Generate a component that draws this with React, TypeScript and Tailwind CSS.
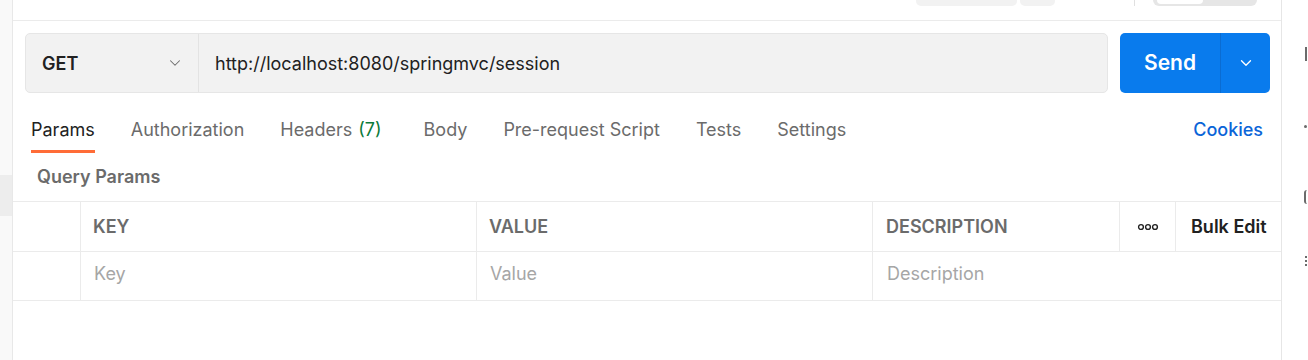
import { ChevronDown } from "lucide-react";

const tabs = [
  { label: "Params", active: true },
  { label: "Authorization" },
  { label: "Headers", count: "(7)" },
  { label: "Body" },
  { label: "Pre-request Script" },
  { label: "Tests" },
  { label: "Settings" },
];

const Dots = () => (
  <svg width="22" height="8" viewBox="0 0 22 8" fill="none" stroke="#212121" strokeWidth="1.4">
    <circle cx="4" cy="4" r="2.4" />
    <circle cx="11" cy="4" r="2.4" />
    <circle cx="18" cy="4" r="2.4" />
  </svg>
);

export default function App() {
  return (
    <div className="flex w-[1308px] h-[360px] bg-white font-['Inter',sans-serif] text-[18px] overflow-hidden">
      {/* left strip */}
      <div className="w-[13px] shrink-0 bg-[#f9f9f9] border-r border-[#e8e8e8] flex flex-col">
        <div className="h-[175px]" />
        <div className="h-[41px] bg-[#ededed]" />
      </div>

      {/* main panel */}
      <div className="w-[1269px] shrink-0 border-r border-[#e6e6e6] flex flex-col">
        {/* clipped toolbar */}
        <div className="h-[21px] border-b border-[#ebebeb] flex items-start">
          <div className="ml-[903px] w-[101px] h-[6px] bg-[#f2f2f2] rounded-b-[5px]" />
          <div className="ml-[3px] w-[35px] h-[6px] bg-[#f2f2f2] rounded-b-[5px]" />
          <div className="ml-[79px] w-px h-[6px] bg-[#e0e0e0]" />
          <div className="ml-[18px] w-[104px] h-[6px] bg-[#e6e6e6] rounded-b-[6px] pl-[4px]">
            <div className="w-[46px] h-[4px] bg-white rounded-b-[4px]" />
          </div>
        </div>

        {/* url row */}
        <div className="flex mt-[12px] pl-[12px] pr-[11px] gap-[12px]">
          <div className="flex flex-1 h-[60px] bg-[#f2f2f2] border border-[#e6e6e6] rounded-[5px]">
            <div className="w-[173px] flex items-center justify-between pl-[16px] pr-[14px] border-r border-[#e3e3e3]">
              <span className="font-semibold text-[#212121]">GET</span>
              <ChevronDown size={18} strokeWidth={1.4} className="text-[#6b6b6b]" />
            </div>
            <div className="flex items-center pl-[16px] text-[#212121]">
              http://localhost:8080/springmvc/session
            </div>
          </div>
          <div className="flex w-[150px] h-[60px] bg-[#097bed] rounded-[5px] text-white">
            <div className="w-[101px] flex items-center justify-center border-r border-[#0a6cd2] text-[21px] font-semibold">
              Send
            </div>
            <div className="flex-1 flex items-center justify-center">
              <ChevronDown size={18} strokeWidth={1.8} />
            </div>
          </div>
        </div>

        {/* tabs */}
        <div className="flex items-end mt-[20px] pl-[18px] pr-[18px]">
          <div className="flex gap-[36px]">
            {tabs.map((t) => (
              <div
                key={t.label}
                className={
                  t.active
                    ? "pt-[5px] pb-[8px] leading-[24px] border-b-[3px] border-[#ff6c37] text-[#212121]"
                    : "pt-[5px] pb-[8px] leading-[24px] border-b-[3px] border-transparent text-[#6b6b6b]"
                }
              >
                {t.label}
                {t.count && <span className="ml-[6px] mr-[6px] text-[#0b7a3a]">{t.count}</span>}
              </div>
            ))}
          </div>
          <div className="ml-auto pb-[11px] leading-[24px] text-[#0b65d8] font-medium">Cookies</div>
        </div>

        <div className="pl-[24px] py-[12px] leading-[24px] font-semibold text-[#6b6b6b]">Query Params</div>

        {/* table */}
        <div className="grid grid-cols-[67px_396px_396px_247px_56px_1fr] border-t border-[#ebebeb]">
          <div className="h-[50px] border-b border-[#ebebeb]" />
          <div className="h-[50px] flex items-center pl-[12px] pb-[1px] border-l border-b border-[#ebebeb] font-semibold text-[#6b6b6b]">KEY</div>
          <div className="h-[50px] flex items-center pl-[12px] pb-[1px] border-l border-b border-[#ebebeb] font-semibold text-[#6b6b6b]">VALUE</div>
          <div className="h-[50px] flex items-center pl-[13px] pb-[1px] border-l border-b border-[#ebebeb] font-semibold text-[#6b6b6b]">DESCRIPTION</div>
          <div className="h-[50px] flex items-center justify-center border-l border-b border-[#ebebeb]">
            <Dots />
          </div>
          <div className="h-[50px] flex items-center pl-[15px] pb-[1px] border-l border-b border-[#ebebeb] font-semibold text-[#212121]">Bulk Edit</div>

          <div className="h-[49px] border-b border-[#ebebeb]" />
          <div className="h-[49px] flex items-center pl-[13px] pb-[6px] border-l border-b border-[#ebebeb] text-[#a6a6a6]">Key</div>
          <div className="h-[49px] flex items-center pl-[13px] pb-[6px] border-l border-b border-[#ebebeb] text-[#a6a6a6]">Value</div>
          <div className="col-span-3 h-[49px] flex items-center pl-[14px] pb-[6px] border-l border-b border-[#ebebeb] text-[#a6a6a6]">Description</div>
        </div>
      </div>

      {/* right strip, icons clipped */}
      <div className="flex-1 flex flex-col items-end pr-[1px]">
        <div className="mt-[47px] w-[2px] h-[14px] bg-[#6b6b6b]" />
        <div className="mt-[64px] w-[3px] h-[3px] rounded-full bg-[#6b6b6b]" />
        <div className="mt-[62px] w-[3px] h-[14px] border-l-[2px] border-[#6b6b6b] rounded-l-full" />
        <div className="mt-[52px] flex flex-col gap-[2px]">
          <div className="w-[2px] h-[2px] bg-[#6b6b6b]" />
          <div className="w-[2px] h-[2px] bg-[#6b6b6b]" />
          <div className="w-[2px] h-[2px] bg-[#6b6b6b]" />
        </div>
      </div>
    </div>
  );
}
